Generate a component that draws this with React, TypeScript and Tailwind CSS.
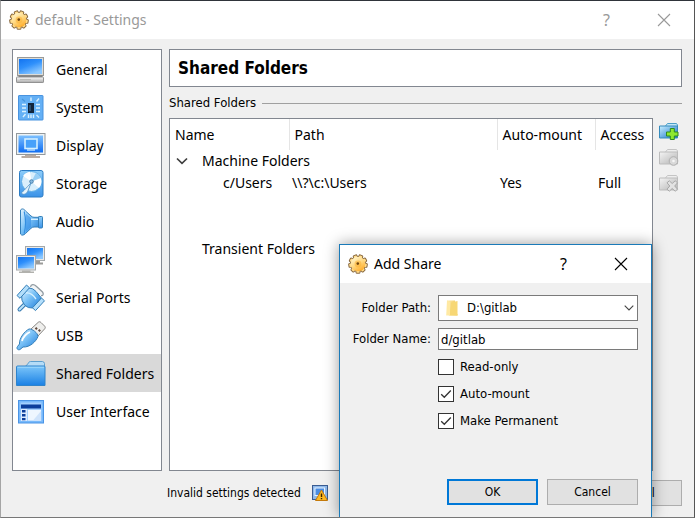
import React, { useState } from 'react';

const UI = "font-['Noto_Sans','Open_Sans',sans-serif]";
const DIALOG = "font-['DejaVu_Sans_Condensed','DejaVu_Sans',sans-serif] [font-stretch:condensed]";

function Gradients() {
  return (
    <svg className="absolute size-0" aria-hidden="true">
      <defs>
        <linearGradient id="screen" x1="0" y1="0" x2="0.6" y2="1">
          <stop offset="0" stopColor="#1273f0" />
          <stop offset="0.5" stopColor="#2f90fb" />
          <stop offset="1" stopColor="#8cc8ff" />
        </linearGradient>
        <linearGradient id="screenDown" x1="0" y1="0" x2="0" y2="1">
          <stop offset="0" stopColor="#7cc0ff" />
          <stop offset="1" stopColor="#0f6df2" />
        </linearGradient>
        <linearGradient id="sky" x1="0" y1="0" x2="0" y2="1">
          <stop offset="0" stopColor="#8dcdfa" />
          <stop offset="1" stopColor="#3b93e8" />
        </linearGradient>
        <linearGradient id="ice" x1="0" y1="0" x2="1" y2="1">
          <stop offset="0" stopColor="#e4f4ff" />
          <stop offset="0.45" stopColor="#7cc3f7" />
          <stop offset="1" stopColor="#1c7ad8" />
        </linearGradient>
        <linearGradient id="folderBlue" x1="0" y1="0" x2="0" y2="1">
          <stop offset="0" stopColor="#7cc6fa" />
          <stop offset="1" stopColor="#1a80e4" />
        </linearGradient>
        <linearGradient id="metal" x1="0" y1="0" x2="0" y2="1">
          <stop offset="0" stopColor="#ffffff" />
          <stop offset="1" stopColor="#a9a9a9" />
        </linearGradient>
        <linearGradient id="greyFolder" x1="0" y1="0" x2="1" y2="1">
          <stop offset="0" stopColor="#f4f4f4" />
          <stop offset="1" stopColor="#b4b4b4" />
        </linearGradient>
        <linearGradient id="toolFolder" x1="0" y1="0" x2="1" y2="1">
          <stop offset="0" stopColor="#c9efff" />
          <stop offset="1" stopColor="#1270c8" />
        </linearGradient>
        <linearGradient id="gold" gradientUnits="userSpaceOnUse" x1="5" y1="3" x2="14" y2="18">
          <stop offset="0" stopColor="#fff6d0" />
          <stop offset="0.5" stopColor="#ffd67c" />
          <stop offset="1" stopColor="#ffa41a" />
        </linearGradient>
        <linearGradient id="paper" x1="0" y1="0" x2="1" y2="0">
          <stop offset="0" stopColor="#fff0b8" />
          <stop offset="1" stopColor="#f0c85c" />
        </linearGradient>
      </defs>
    </svg>
  );
}

const teeth = [20, 60, 100, 140, 180, 220, 260, 300, 340];

function GearIcon() {
  return (
    <svg className="size-5 shrink-0" viewBox="0 0 20 20" aria-hidden="true">
      {teeth.map((angle) => (
        <rect key={angle} x="7.6" y="0.2" width="4.8" height="6" rx="1.4" fill="#8a6a40" transform={`rotate(${angle} 10 10)`} />
      ))}
      <circle cx="10" cy="10" r="8" fill="#8a6a40" />
      {teeth.map((angle) => (
        <rect key={angle} x="8.4" y="1.2" width="3.2" height="5" rx="0.9" fill="#ffdc8c" transform={`rotate(${angle} 10 10)`} />
      ))}
      <circle cx="10" cy="10" r="7.3" fill="url(#gold)" />
      <circle cx="10" cy="10" r="3.4" fill="#fbb033" opacity="0.55" />
      <circle cx="9.8" cy="9.6" r="1.3" fill="#71450e" />
    </svg>
  );
}

function CategoryIcon({ name }: { name: string }) {
  const art: Record<string, React.ReactNode> = {
    General: (
      <>
        <rect x="1.5" y="2.5" width="26" height="18" fill="#dcdcd8" stroke="#9a9a98" />
        <rect x="3" y="4" width="23" height="15" fill="url(#screen)" />
        <path d="M2.5 20.5 H26.5 V23 H2.5Z" fill="#777" />
        <rect x="0.5" y="22" width="27" height="5.5" rx="0.6" fill="url(#metal)" stroke="#929292" />
        <path d="M4 24.6 H15" stroke="#b8b8b4" />
      </>
    ),
    System: (
      <>
        <rect x="2.5" y="2.5" width="24.5" height="24.5" rx="0.5" fill="#64b0f5" stroke="#4993df" />
        <rect x="12" y="10" width="6" height="10" fill="#12253c" />
        <rect x="13" y="12" width="2" height="6" fill="#2a4d6e" />
        <path
          d="M15 4.5 V8 M20.5 8.5 L23 5.5 M6 11.5 H10 M6 15 H10 M6 18.5 H10 M20 11.5 H24 M20 15 H24 M20 18.5 H24 M12.5 21.5 V25 M15 21.5 V25 M17.5 21.5 V25 M9.5 21 L7 24 M20.5 22 L23 24.5"
          stroke="#d9f1ff"
          strokeWidth="1.4"
        />
        <path d="M6 6 L9 8.5" stroke="#4796db" strokeWidth="1.2" />
      </>
    ),
    Display: (
      <>
        <rect x="0.5" y="2.5" width="28.5" height="21" fill="#edf2f4" stroke="#92989c" />
        <rect x="2.5" y="4.5" width="24.5" height="17" fill="url(#screenDown)" />
        <rect x="9" y="8" width="12" height="9.5" fill="#47a1fa" stroke="#d3efff" strokeWidth="1.6" />
        <path d="M11 19 H19" stroke="#bde2ff" strokeWidth="1.4" />
        <path d="M9 24 H20 V25 H24 V27 H5.5 V25 H9Z" fill="#b9aba1" />
      </>
    ),
    Storage: (
      <>
        <rect x="3.5" y="1.5" width="23.5" height="26.5" rx="2" fill="url(#sky)" stroke="#2c7dc5" />
        <circle cx="15.5" cy="12.5" r="10" fill="#d9effc" stroke="#5eaee8" />
        <path d="M15.5 12.5 L7 7 A10 10 0 0 1 14 2.8Z M15.5 12.5 L24.8 9 A10 10 0 0 1 23 19Z" fill="#fff" />
        <path d="M15.5 12.5 L20 3.8 A10 10 0 0 1 24.8 9Z" fill="#98cff5" />
        <circle cx="15.5" cy="12.5" r="1.8" fill="#87b9e0" stroke="#38729e" strokeWidth="0.8" />
        <path d="M15 14 L11.5 23 C9 26.5 5.5 25.5 5.5 23.5 C8 22 9 20 15 14Z" fill="#e6f4fc" stroke="#4c8fc4" strokeWidth="0.8" />
      </>
    ),
    Audio: (
      <>
        <path d="M4.5 3 C6 1.2 8 1.8 9.5 4 L15 9 Q16.5 10.3 18 10.3 H23 V20 H18 Q16.5 20 15 21.3 L9.5 26.5 C7.5 28.6 5.5 28.6 4.5 27Z" fill="url(#ice)" stroke="#347fb9" />
        <path d="M8.2 4.5 C9.8 11 9.8 20 8.2 26.5" fill="none" stroke="#358fe0" strokeWidth="1.2" />
        <path d="M10 6.5 L15 11 V20 L10 24.5Z" fill="#2f8ae6" opacity="0.55" />
        <rect x="22.5" y="9.5" width="4" height="11.5" rx="0.8" fill="url(#sky)" stroke="#347fb9" />
        <path d="M15 12.3 H22" stroke="#dff4ff" strokeWidth="1.3" />
      </>
    ),
    Network: (
      <>
        <rect x="9.5" y="1.5" width="19" height="14" fill="#e9e9e7" stroke="#a4a8aa" />
        <rect x="11" y="3" width="16" height="11" fill="url(#screen)" />
        <path d="M17 16 H24 V17.5 H27 V19.5 H17Z" fill="#9b9b99" />
        <rect x="0.5" y="10.5" width="19" height="14.5" fill="#e9e9e7" stroke="#a4a8aa" />
        <rect x="2" y="12" width="16" height="11.5" fill="url(#screen)" />
        <path d="M6 25.5 H14.5 V26.5 H18 V28 H3 V26.5 H6Z" fill="#b1b1ad" />
      </>
    ),
    'Serial Ports': (
      <>
        <path d="M14.5 4 C15 1 18 1 20 3 L26.5 9 C28 11 27 13 25 12.5" fill="#f3f5f6" stroke="#929ca3" strokeWidth="1.3" />
        <path d="M9 21 L3.5 26.5" stroke="#387ab0" strokeWidth="4" strokeLinecap="round" />
        <path d="M9 21 L3.5 26.5" stroke="#bce4fd" strokeWidth="2" strokeLinecap="round" />
        <path d="M5.5 11 L13 5 Q17 5 20 8.5 L25 14.5 L22 21 L16.5 25 Q12 25.5 8.5 22 Q5 18 5.5 11Z" fill="url(#ice)" stroke="#347fb9" />
        <path d="M1 12.5 L10.5 2 L13.5 4.8 L4 15.3Z M16.5 24.8 L25.5 15 L28.5 17.8 L19.5 27.6Z" fill="#b4dffb" stroke="#347fb9" strokeLinejoin="round" />
        <path d="M10 10 Q15 9 20 16" fill="none" stroke="#d8f1ff" strokeWidth="1.3" />
      </>
    ),
    USB: (
      <>
        <path d="M15 8 L22 1.5 C23 0.5 24 0.5 25 1.5 L28.5 5 C29.5 6 29.5 7 28.5 8 L22 15Z" fill="#eeeeec" stroke="#898784" />
        <path d="M19.5 6.8 L21 8.3 M22.7 8.8 L24.2 10.3" stroke="#5d473c" strokeWidth="2" />
        <path d="M13 8 C16 7.5 22 12 22 15.5 C20 20.5 14 26.5 7 26 L4 28.5 C2 29.5 0 27.5 1.5 25.5 L3.5 23 C3 17 9 10 13 8Z" fill="url(#ice)" stroke="#347fb9" />
        <path d="M6 20 C7 16 11 12 14 11" fill="none" stroke="#fff" strokeWidth="1.8" />
      </>
    ),
    'Shared Folders': (
      <>
        <path d="M9.5 7 Q11.5 6 12.5 3.8 Q13 2.5 14.5 2.5 H26.5 Q28 2.5 28.5 4.5 V10 H10Z" fill="#b5dcf7" stroke="#5c9fce" />
        <path d="M0.5 8 Q0.5 7 1.5 7 H28 Q29 7 29 8 V26.5 H0.5Z" fill="url(#folderBlue)" stroke="#2f83cb" />
        <path d="M1.5 8.3 H28" stroke="#9bd6fc" />
      </>
    ),
    'User Interface': (
      <>
        <rect x="2.5" y="3.5" width="25" height="22.5" fill="#77b9fb" stroke="#4a94e6" />
        <rect x="4.5" y="5.5" width="21" height="18.5" fill="#a3d0ff" />
        <rect x="5" y="7.5" width="20" height="4" fill="#0b3e9c" />
        <rect x="5" y="12" width="6" height="12" fill="#dcebff" />
        <rect x="12" y="13" width="13" height="10.5" fill="#eef6ff" />
        <path d="M17 23.5 L25 14 V23.5Z" fill="#cfe3fb" />
        <path d="M6 13 H9.5 V15.5 H6Z M6 17 H9.5 V19.5 H6Z M6 21 H9.5 V23.3 H6Z" fill="#0b3e9c" />
      </>
    ),
  };
  return (
    <svg className="size-[30px] shrink-0" viewBox="0 0 30 30" aria-hidden="true">
      {art[name]}
    </svg>
  );
}

function ToolIcon({ kind }: { kind: 'add' | 'edit' | 'remove' }) {
  const on = kind === 'add';
  return (
    <svg className="size-5" viewBox="0 0 20 20" aria-hidden="true">
      <path d="M6.5 4 L8.5 1.5 H17.5 L18.5 3 V6 H6Z" fill={on ? '#c2e8f7' : '#eee'} stroke={on ? '#4c9fc8' : '#c4c4c4'} />
      <path d="M0.5 4 H18.5 V16 H0.5Z" fill={on ? 'url(#toolFolder)' : 'url(#greyFolder)'} stroke={on ? '#368bbd' : '#bcbcbc'} />
      {kind === 'add' && (
        <path d="M11.3 6.5 H15.3 V10 H19 V14 H15.3 V17.5 H11.3 V14 H7.5 V10 H11.3Z" fill="#8ee82f" stroke="#2d8a20" strokeLinejoin="round" />
      )}
      {kind === 'edit' && (
        <>
          <circle cx="14.5" cy="13" r="4.3" fill="#d9d9d9" stroke="#b0b0b0" />
          <circle cx="14.5" cy="13" r="1.3" fill="#f6f6f6" />
        </>
      )}
      {kind === 'remove' && (
        <path d="M8 8.8 L10.3 6.8 L13.2 9.5 L16.2 6.8 L18.5 8.8 L15.7 12 L18.5 15.2 L16.2 17.2 L13.2 14.5 L10.3 17.2 L8 15.2 L10.8 12Z" fill="#e2e2e2" stroke="#a8a8a8" strokeLinejoin="round" />
      )}
    </svg>
  );
}

function CloseIcon() {
  return (
    <svg className="size-3.5" viewBox="0 0 14 14" aria-hidden="true">
      <path d="M1 1 L13 13 M13 1 L1 13" stroke="currentColor" strokeWidth="1.1" />
    </svg>
  );
}

function WarningIcon() {
  return (
    <svg className="size-4" viewBox="0 0 16 16" role="img" aria-label="Warning">
      <rect x="0.5" y="0.5" width="15" height="14" fill="#8fb9ea" stroke="#3a5c92" />
      <rect x="3" y="3" width="9.5" height="7.5" fill="#4b8de2" stroke="#e8f4ff" />
      <path d="M9.5 5 L15.5 15.5 H3.5Z" fill="#ffba22" stroke="#c57a0b" strokeLinejoin="round" />
      <path d="M9.5 8.5 V12 M9.5 13 V14.3" stroke="#3b2500" strokeWidth="1.4" />
    </svg>
  );
}

function TitleBar({ title, className }: { title: string; className: string }) {
  return (
    <header className={`flex h-[38px] shrink-0 items-center bg-white pr-[2px] pl-2 ${className}`}>
      <GearIcon />
      <h1 className="ml-[6px] flex-1 text-[14px] leading-5">{title}</h1>
      <button className="flex h-full w-[57px] items-center justify-center text-base" aria-label="Help">?</button>
      <button className="flex h-full w-[57px] items-center justify-center" aria-label="Close">
        <CloseIcon />
      </button>
    </header>
  );
}

const categories = [
  'General', 'System', 'Display', 'Storage', 'Audio', 'Network', 'Serial Ports', 'USB', 'Shared Folders', 'User Interface',
];

function Sidebar() {
  const [current, setCurrent] = useState('Shared Folders');
  return (
    <nav className="w-[150px] shrink-0 border border-[#828790] bg-white">
      {categories.map((name) => (
        <button
          key={name}
          onClick={() => setCurrent(name)}
          className={`flex h-[38px] w-full items-center gap-[10px] pt-px pl-[3px] text-left text-[14px] leading-5 whitespace-nowrap ${
            name === current ? 'bg-[#d9d9d9]' : ''
          }`}
        >
          <CategoryIcon name={name} />
          {name}
        </button>
      ))}
    </nav>
  );
}

function FolderTable() {
  return (
    <div className="min-w-0 flex-1 border border-[#828790] bg-white">
      <table className="w-full table-fixed border-collapse text-left text-[14px] leading-5 whitespace-nowrap">
        <colgroup>
          <col className="w-[119px]" />
          <col />
          <col className="w-[98px]" />
          <col className="w-[57px]" />
        </colgroup>
        <thead>
          <tr className="h-[31px]">
            <th className="border-r border-[#e5e5e5] pl-[5px] font-normal">Name</th>
            <th className="border-r border-[#e5e5e5] pl-[5px] font-normal">Path</th>
            <th className="border-r border-[#e5e5e5] pl-[5px] font-normal">Auto-mount</th>
            <th className="pl-[5px] font-normal">Access</th>
          </tr>
        </thead>
        <tbody>
          <tr className="h-[22px]">
            <td colSpan={4}>
              <div className="flex items-center gap-[14px] pl-[6px]">
                <svg className="h-2 w-3" viewBox="0 0 12 8" aria-hidden="true">
                  <path d="M1 1.5 L6 6.3 L11 1.5" fill="none" stroke="#3f3f3f" strokeWidth="1.7" />
                </svg>
                Machine Folders
              </div>
            </td>
          </tr>
          <tr className="h-[22px]">
            <td className="pl-[53px]">c/Users</td>
            <td className="pl-[3px]">{'\\\\?\\c:\\Users'}</td>
            <td className="pl-[3px]">Yes</td>
            <td className="pl-[3px]">Full</td>
          </tr>
          <tr className="h-[44px]">
            <td colSpan={4} />
          </tr>
          <tr className="h-[22px]">
            <td colSpan={4} className="pl-8">Transient Folders</td>
          </tr>
        </tbody>
      </table>
    </div>
  );
}

function CheckRow({ label, initial }: { label: string; initial: boolean }) {
  const [checked, setChecked] = useState(initial);
  return (
    <label className="flex h-[27px] items-center gap-[6px]">
      <span className="grid size-4 shrink-0">
        <input
          type="checkbox"
          checked={checked}
          onChange={() => setChecked(!checked)}
          className="col-start-1 row-start-1 size-4 appearance-none border border-[#333] bg-white"
        />
        {checked && (
          <svg className="pointer-events-none col-start-1 row-start-1 size-4" viewBox="0 0 16 16" aria-hidden="true">
            <path d="M3.2 8.2 L6.3 11.3 L12.8 4.5" fill="none" stroke="#333" strokeWidth="1.3" />
          </svg>
        )}
      </span>
      {label}
    </label>
  );
}

function AddShareDialog() {
  const [name, setName] = useState('d/gitlab');
  return (
    <section
      role="dialog"
      aria-label="Add Share"
      className="absolute top-[243px] right-[42px] bottom-0 flex w-[313px] flex-col border border-b-0 border-[#1a7ab8] bg-[#f0f0f0] shadow-[0_0_14px_rgba(0,0,0,0.4)]"
    >
      <TitleBar title="Add Share" className="text-black" />
      <form className={`flex flex-1 flex-col pt-3 pr-[13px] pl-[11px] text-[13px] leading-4 ${DIALOG}`} onSubmit={(e) => e.preventDefault()}>
        <div className="grid grid-cols-[80px_1fr] items-center gap-x-[7px] gap-y-[7px]">
          <label htmlFor="path" className="text-right whitespace-nowrap">Folder Path:</label>
          <div className="relative">
            <select id="path" className="block h-[26px] w-full appearance-none border border-[#7a7a7a] bg-white pl-7">
              <option>D:\gitlab</option>
            </select>
            <svg className="pointer-events-none absolute top-[5px] left-[7px] size-4" viewBox="0 0 16 16" aria-hidden="true">
              <path d="M2 0.5 H10 V13 L12.5 14 V15.5 H1Z" fill="url(#paper)" />
              <path d="M6 2.5 L12.5 1 V15.5 H4.5Z" fill="#f7d775" />
              <path d="M2 0.5 L5 2 V15.5 L2 14.5Z" fill="#ffe9a3" />
            </svg>
            <svg className="pointer-events-none absolute top-[10px] right-1 h-[6px] w-[10px]" viewBox="0 0 10 6" aria-hidden="true">
              <path d="M0.7 0.7 L5 5 L9.3 0.7" fill="none" stroke="#444" strokeWidth="1.1" />
            </svg>
          </div>
          <label htmlFor="name" className="text-right whitespace-nowrap">Folder Name:</label>
          <input id="name" value={name} onChange={(e) => setName(e.target.value)} className="h-[22px] w-full border border-[#7a7a7a] bg-white px-[2px]" />
          <div className="col-start-2 -mt-1">
            <CheckRow label="Read-only" initial={false} />
            <CheckRow label="Auto-mount" initial />
            <CheckRow label="Make Permanent" initial />
          </div>
        </div>
        <div className="mt-auto mb-3 flex justify-end gap-[9px] text-[12px]">
          <button className="h-[26px] w-[91px] border-2 border-[#0078d7] bg-[#e1e1e1]">OK</button>
          <button className="h-[26px] w-[91px] border border-[#adadad] bg-[#e1e1e1]">Cancel</button>
        </div>
      </form>
    </section>
  );
}

export default function App() {
  return (
    <main className={`relative flex h-screen flex-col overflow-hidden border border-t-[#2f343a] border-r-[#555] border-b-[#777] border-l-[#a5a5a5] bg-[#f0f0f0] text-black ${UI}`}>
      <Gradients />
      <TitleBar title="default - Settings" className="text-[#999]" />
      <div className="flex min-h-0 flex-1 gap-[7px] pt-[10px] pr-3 pl-[11px]">
        <Sidebar />
        <div className="flex min-w-0 flex-1 flex-col">
          <h2 className={`flex h-[38px] shrink-0 items-center border border-[#828790] bg-white pt-[2px] pl-2 text-[17px] font-bold ${DIALOG}`}>
            Shared Folders
          </h2>
          <div className={`flex h-[31px] shrink-0 items-center gap-[6px] pt-px text-[13px] ${DIALOG}`}>
            <span>Shared Folders</span>
            <span className="h-px flex-1 bg-[#a0a0a0]" />
          </div>
          <div className="flex min-h-0 flex-1 gap-[6px]">
            <FolderTable />
            <div className="flex w-[23px] shrink-0 flex-col gap-[6px] pt-1">
              <button aria-label="Add shared folder"><ToolIcon kind="add" /></button>
              <button aria-label="Edit shared folder" disabled><ToolIcon kind="edit" /></button>
              <button aria-label="Remove shared folder" disabled><ToolIcon kind="remove" /></button>
            </div>
          </div>
        </div>
      </div>
      <footer className={`flex h-[46px] shrink-0 items-center gap-[11px] pr-3 pb-[3px] pl-[166px] text-[12px] ${DIALOG}`}>
        <span>Invalid settings detected</span>
        <WarningIcon />
        <button className="ml-auto h-[26px] w-[91px] border border-[#adadad] bg-[#e1e1e1]">Cancel</button>
      </footer>
      <AddShareDialog />
    </main>
  );
}
